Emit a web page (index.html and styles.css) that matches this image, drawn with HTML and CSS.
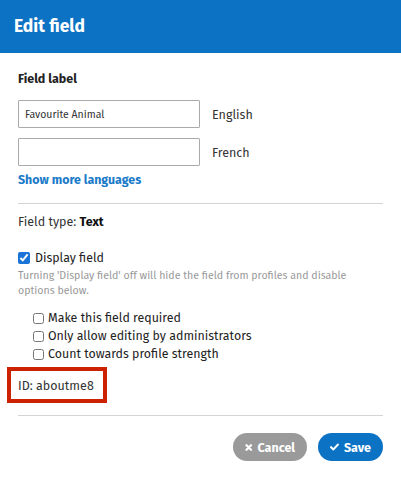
FILE: index.html
```html
<!DOCTYPE html>
<html>
<head>
<meta charset="utf-8">
<link rel="stylesheet" href="styles.css">
</head>
<body>
<div class="dialog">
  <div class="header">Edit field</div>
  <div class="body">
    <div class="label">Field label</div>
    <div class="lang-row first">
      <input class="text-input" type="text" value="Favourite Animal">
      <span class="lang">English</span>
    </div>
    <div class="lang-row">
      <input class="text-input" type="text" value="">
      <span class="lang">French</span>
    </div>
    <a class="more" href="#">Show more languages</a>
    <hr class="rule">
    <div class="type">Field type: <b>Text</b></div>
    <label class="check main"><input type="checkbox" checked><span>Display field</span></label>
    <p class="help">Turning 'Display field' off will hide the field from profiles and disable options below.</p>
    <div class="options">
      <label class="check sub"><input type="checkbox"><span>Make this field required</span></label>
      <label class="check sub"><input type="checkbox"><span>Only allow editing by administrators</span></label>
      <label class="check sub"><input type="checkbox"><span>Count towards profile strength</span></label>
    </div>
    <div class="id-box">ID: aboutme8</div>
    <hr class="rule bottom">
    <div class="actions">
      <button class="btn cancel"><svg width="9" height="9" viewBox="0 0 10 10"><path d="M2 2 L8 8 M8 2 L2 8" stroke="#fff" stroke-width="3" stroke-linecap="round"/></svg>Cancel</button>
      <button class="btn save"><svg width="12" height="10" viewBox="0 0 12 10"><path d="M1.5 5.2 L4.6 8.2 L10.5 1.8" stroke="#fff" stroke-width="2.8" fill="none" stroke-linecap="round" stroke-linejoin="round"/></svg>Save</button>
    </div>
  </div>
</div>
</body>
</html>
```
FILE: styles.css
```css
* { box-sizing: border-box; }
body {
  margin: 0;
  font-family: "Fira Sans", "Lato", "Noto Sans", sans-serif;
  color: #222;
  background: #fff;
}
.header {
  height: 53px;
  background: #0b72c4;
  color: #fff;
  font-weight: 700;
  font-size: 17.5px;
  padding-left: 14px;
  display: flex;
  align-items: center;
}
.body {
  padding: 0 18px;
}
.label {
  font-weight: 700;
  font-size: 12.5px;
  margin-top: 18px;
  line-height: 16px;
}
.lang-row {
  display: flex;
  align-items: center;
  margin-top: 10px;
}
.lang-row.first { margin-top: 13px; }
.text-input {
  width: 182px;
  height: 28px;
  border: 1px solid #aaa;
  border-radius: 1px;
  padding: 0 6px;
  font-family: inherit;
  font-size: 10.5px;
  color: #333;
  margin: 0;
}
.lang {
  margin-left: 12px;
  font-size: 12.5px;
  color: #333;
}
.more {
  display: block;
  margin-top: 6px;
  color: #1a7bc9;
  font-weight: 700;
  font-size: 12.4px;
  text-decoration: none;
  line-height: 16px;
}
.rule {
  border: 0;
  border-top: 1px solid #d4d4d4;
  margin: 15px 0 0;
}
.type {
  font-size: 12.5px;
  margin-top: 10px;
  line-height: 16px;
  color: #333;
}
.type b { color: #111; }
.check {
  display: flex;
  align-items: center;
  font-size: 12.4px;
  color: #222;
  line-height: 18px;
}
.check input {
  margin: 0 5px 0 0;
  width: 12px;
  height: 12px;
}
.main { margin-top: 19px; }
.main input { accent-color: #1a73d6; }
.help {
  margin: 1px 0 0;
  font-size: 10.6px;
  line-height: 15px;
  color: #999;
}
.options {
  margin-top: 11px;
  padding-left: 15px;
}
.sub input { width: 11px; height: 11px; margin-right: 4px; }
.id-box {
  margin: 4px 0 0 -11px;
  width: 100px;
  height: 36px;
  border: 4px solid #cc2200;
  padding-left: 7px;
  display: flex;
  align-items: center;
  font-size: 12.5px;
  color: #333;
}
.rule.bottom { margin-top: 12px; }
.actions {
  display: flex;
  justify-content: flex-end;
  gap: 11px;
  margin-top: 17px;
}
.btn {
  height: 28px;
  border: 0;
  border-radius: 14px;
  color: #fff;
  font-family: inherit;
  font-weight: 700;
  font-size: 12.5px;
  display: flex;
  align-items: center;
  gap: 5px;
  padding: 0 12px;
}
.cancel { background: #9a9a9a; width: 74px; }
.save { background: #0b72c4; width: 65px; }
```
